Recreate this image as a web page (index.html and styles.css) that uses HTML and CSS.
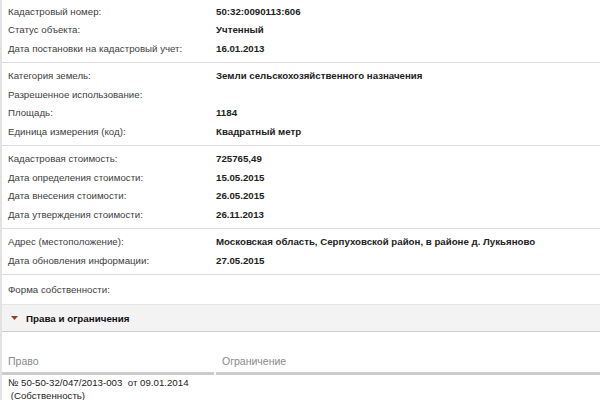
FILE: index.html
```html
<!DOCTYPE html>
<html lang="ru">
<head>
<meta charset="utf-8">
<link rel="stylesheet" href="styles.css">
</head>
<body>
<div class="panel">
  <div class="group first">
    <div class="row"><span class="label">Кадастровый номер:</span><span class="value">50:32:0090113:606</span></div>
    <div class="row"><span class="label">Статус объекта:</span><span class="value">Учтенный</span></div>
    <div class="row"><span class="label">Дата постановки на кадастровый учет:</span><span class="value">16.01.2013</span></div>
  </div>
  <div class="group">
    <div class="row"><span class="label">Категория земель:</span><span class="value">Земли сельскохозяйственного назначения</span></div>
    <div class="row"><span class="label">Разрешенное использование:</span><span class="value"></span></div>
    <div class="row"><span class="label">Площадь:</span><span class="value">1184</span></div>
    <div class="row"><span class="label">Единица измерения (код):</span><span class="value">Квадратный метр</span></div>
  </div>
  <div class="group">
    <div class="row"><span class="label">Кадастровая стоимость:</span><span class="value">725765,49</span></div>
    <div class="row"><span class="label">Дата определения стоимости:</span><span class="value">15.05.2015</span></div>
    <div class="row"><span class="label">Дата внесения стоимости:</span><span class="value">26.05.2015</span></div>
    <div class="row"><span class="label">Дата утверждения стоимости:</span><span class="value">26.11.2013</span></div>
  </div>
  <div class="group">
    <div class="row"><span class="label">Адрес (местоположение):</span><span class="value">Московская область, Серпуховской район, в районе д. Лукьяново</span></div>
    <div class="row"><span class="label">Дата обновления информации:</span><span class="value">27.05.2015</span></div>
  </div>
  <div class="group last">
    <div class="row"><span class="label">Форма собственности:</span><span class="value"></span></div>
  </div>
  <div class="section-head">
    <svg class="caret" width="7" height="4" viewBox="0 0 7 4"><path d="M0 0H7L3.5 4Z" fill="#9b3a2a"/></svg>
    <span>Права и ограничения</span>
  </div>
  <div class="rights">
    <div class="rights-head">
      <div class="th">Право</div>
      <div class="th">Ограничение</div>
    </div>
    <div class="rights-row">
      <div class="td">№ 50-50-32/047/2013-003&nbsp; от 09.01.2014<br>&nbsp;(Собственность)</div>
      <div class="td"></div>
    </div>
  </div>
</div>
</body>
</html>
```
FILE: styles.css
```css
html, body {
  margin: 0;
  padding: 0;
  background: #fff;
}
body {
  font-family: "Liberation Sans", Arial, sans-serif;
  font-size: 9.7px;
  color: #333;
}
.panel {
  width: 600px;
  height: 400px;
  overflow: hidden;
  border-left: 2px solid #e2e2e2;
  box-sizing: border-box;
}
.group {
  padding: 4px 0 4px 6px;
  border-bottom: 1px solid #dcdcdc;
}
.group.first {
  padding-top: 2px;
}
.group.last {
  border-bottom: none;
  padding-top: 6px;
  padding-bottom: 5px;
}
.row {
  display: grid;
  grid-template-columns: 208px 1fr;
  height: 18.5px;
  align-items: center;
}
.label {
  color: #404040;
}
.value {
  font-weight: bold;
  color: #222;
}
.section-head {
  display: flex;
  align-items: center;
  gap: 8px;
  height: 26px;
  padding-left: 9px;
  background: #f3f3f3;
  border-top: 1px solid #e4e4e4;
  border-bottom: 1px solid #cfcfcf;
  font-weight: bold;
  font-size: 9.8px;
  color: #111;
}
.caret {
  display: block;
}
.rights-head {
  display: grid;
  grid-template-columns: 212px 1fr;
  column-gap: 2px;
  padding-top: 23px;
}
.th {
  padding: 0 0 5px 6px;
  color: #8a8a8a;
  font-size: 10.5px;
  border-bottom: 3px solid #cccccc;
}
.rights-row {
  display: grid;
  grid-template-columns: 214px 1fr;
  padding-top: 1px;
}
.td {
  padding-left: 6px;
  line-height: 13px;
  color: #222;
}
```
